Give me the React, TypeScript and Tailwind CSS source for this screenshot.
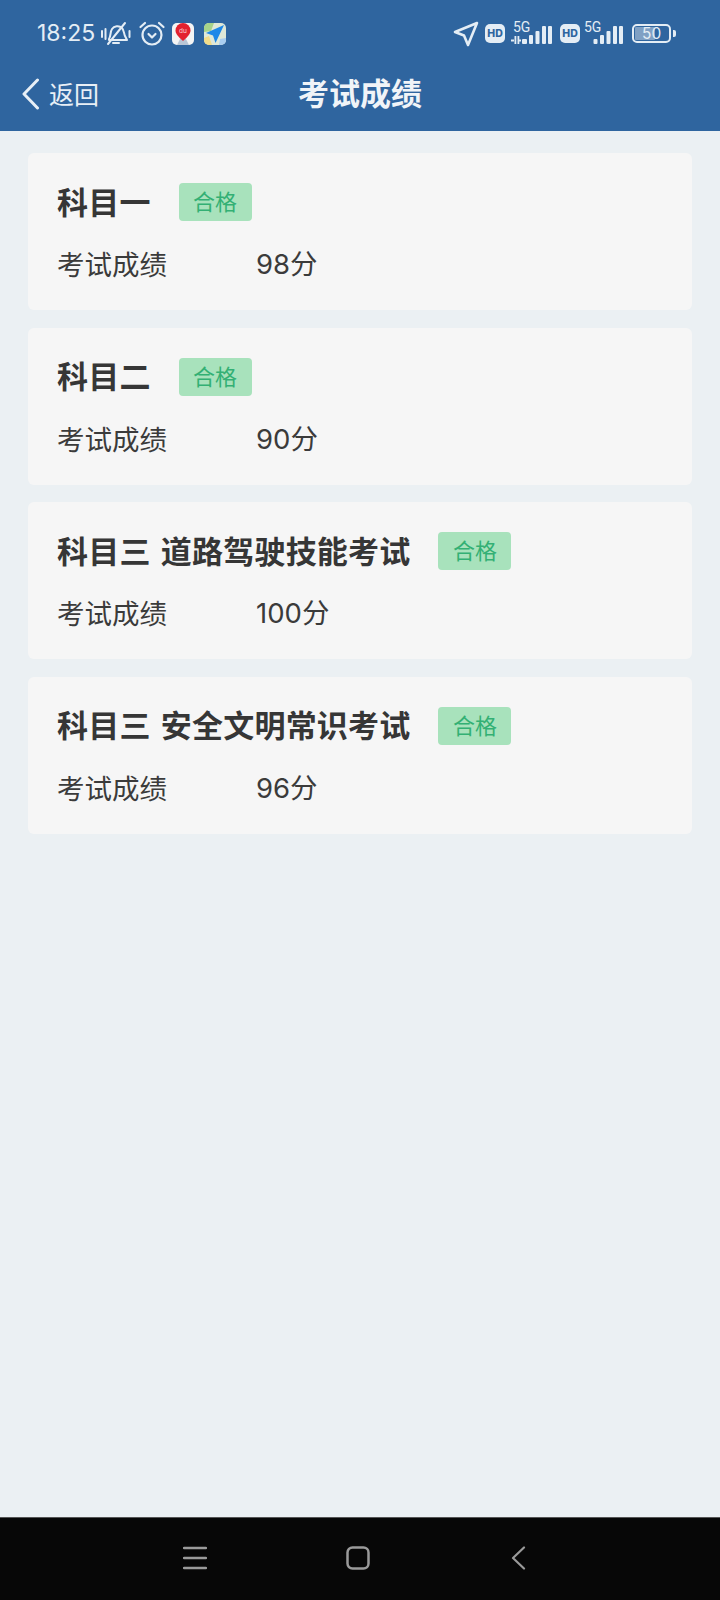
const font = { fontFamily: 'Inter, "Noto Sans CJK SC", "Noto Sans", sans-serif' };
const cjk = { fontFamily: '"Noto Sans CJK SC", "Noto Sans", sans-serif' };

const subjects = [
  { name: '科目一', score: '98分' },
  { name: '科目二', score: '90分' },
  { name: '科目三 道路驾驶技能考试', score: '100分' },
  { name: '科目三 安全文明常识考试', score: '96分' },
];

const Signal = ({ transfer }: { transfer?: boolean }) => (
  <div className={transfer ? 'relative w-[41px] h-[30px]' : 'relative w-[39px] h-[30px]'}>
    <span className={transfer ? "absolute left-[2px] top-[1px] text-[14px] leading-[14px] text-[#e4edf5] font-['Roboto']" : "absolute left-[0px] top-[1px] text-[14px] leading-[14px] text-[#e4edf5] font-['Roboto']"}>
      5G
    </span>
    {transfer ? (
      <svg width="41" height="30" viewBox="0 0 41 30" fill="#e4edf5">
        <rect x="0" y="20.500" width="3" height="2" />
        <rect x="3.500" y="17" width="1.800" height="8" />
        <rect x="6.500" y="17" width="1.800" height="8" />
        <rect x="8" y="20.500" width="2" height="2" />
        <rect x="11" y="20" width="5" height="5" rx="1" />
        <rect x="18" y="16" width="4" height="9" rx="1" />
        <rect x="24.500" y="12" width="4" height="13" rx="1" />
        <rect x="31" y="7" width="4" height="18" rx="1" />
        <rect x="37" y="7" width="4" height="18" rx="1" />
      </svg>
    ) : (
      <svg width="39" height="30" viewBox="0 0 39 30" fill="#e4edf5">
        <rect x="9.500" y="20" width="4" height="5" rx="1" />
        <rect x="16" y="16" width="4" height="9" rx="1" />
        <rect x="22.500" y="12" width="4" height="13" rx="1" />
        <rect x="29" y="7" width="4" height="18" rx="1" />
        <rect x="35" y="7" width="4" height="18" rx="1" />
      </svg>
    )}
  </div>
);

const Hd = () => (
  <div className="w-[20px] h-[19px] rounded-[5px] bg-[#e4edf5] text-[#2f659f] text-[10.500px] leading-[19px] font-extrabold text-center font-['Inter']">
    HD
  </div>
);

const StatusBar = () => (
  <div className="h-[66px] flex items-center pl-[37px] pr-[44px] pt-[1px]">
    <span className="text-[23px] text-[#e4edf5] font-['Inter'] w-[65px] whitespace-nowrap">18:25</span>
    <svg className="ml-[-1px]" width="30" height="28" viewBox="0 0 30 28" fill="none" stroke="#e4edf5" strokeWidth="2" strokeLinecap="round" strokeLinejoin="round">
      <path d="M8 19c2-3 1-7 3-10 2-3 7-4 10-1 2 2 2 6 3 8l2 4H8z" />
      <path d="M12 23h6" />
      <path d="M7 24 24 3" />
      <path d="M1 11v6M4.500 9v10M28.500 11v6" />
    </svg>
    <svg className="ml-[7px]" width="28" height="28" viewBox="0 0 28 28" fill="none" stroke="#e4edf5" strokeWidth="2.200" strokeLinecap="round" strokeLinejoin="round">
      <circle cx="14" cy="15" r="9.500" />
      <path d="M10.500 14l3.500 3.500 3.500-3.500" />
      <path d="M2.500 7 7 3M25.500 7 21 3" />
    </svg>
    <svg className="ml-[6px]" width="22" height="22" viewBox="0 0 22 22">
      <rect width="22" height="22" rx="5" fill="#f4f4f4" />
      <path d="M5 22 8 16h6l3 6z" fill="#b9c6d6" />
      <path d="M11 18C6.500 14 3.500 11 3.500 7.500a7.500 7.500 0 0 1 15 0C18.500 11 15.500 14 11 18z" fill="#e3212f" />
      <text x="11" y="10" textAnchor="middle" fontSize="7" fontFamily="Roboto" fill="#f9c6ca">du</text>
    </svg>
    <svg className="ml-[10px]" width="22" height="22" viewBox="0 0 22 22">
      <rect width="22" height="22" rx="5" fill="#dfe8d8" />
      <path d="M0 5a5 5 0 0 1 5-5h5L7 8 0 9z" fill="#a7d38a" />
      <path d="M0 15l5-2 3 9H5a5 5 0 0 1-5-5z" fill="#f2dc8a" />
      <path d="M15 22l1-6 6-1v2a5 5 0 0 1-5 5z" fill="#a9cdf0" />
      <path d="M20 2 2 10l7 2.500 2.500 7.500z" fill="#1e88e8" />
    </svg>
    <div className="flex-1" />
    <svg width="26" height="26" viewBox="0 0 26 26" fill="none" stroke="#e4edf5" strokeWidth="2.600" strokeLinejoin="round">
      <path d="M24 2 2 11l9 3.500L15 24z" />
    </svg>
    <div className="ml-[6px]"><Hd /></div>
    <div className="ml-[6px]"><Signal transfer /></div>
    <div className="ml-[8px]"><Hd /></div>
    <div className="ml-[4px]"><Signal /></div>
    <div className="ml-[9px] w-[39px] h-[19px] rounded-[5px] border-2 border-[#e4edf5] p-[1px]">
      <div className="relative w-[20px] h-full bg-[#7fa0c4] rounded-[1px]">
        <span className="absolute left-[7px] top-[-3px] text-[15.500px] leading-[19px] text-[#e4edf5] font-['Inter']">50</span>
      </div>
    </div>
    <div className="ml-[2px] w-[3px] h-[7px] rounded-r-[2px] bg-[#e4edf5]" />
  </div>
);

const Header = () => (
  <div className="bg-[#2f659f] h-[131px] flex flex-col shrink-0">
    <StatusBar />
    <div className="relative flex-1 flex items-center justify-center pb-[15px]" style={cjk}>
      <span className="text-[31px] font-bold text-[#f0f4f8] leading-none">考试成绩</span>
      <div className="absolute left-[22px] top-[10px] flex items-center">
        <svg className="mt-[2px]" width="18" height="32" viewBox="0 0 18 32" fill="none" stroke="#e8eff6" strokeWidth="3" strokeLinecap="round" strokeLinejoin="round">
          <path d="M15.500 2 2 16l13.500 14" />
        </svg>
        <span className="ml-[9px] text-[25px] text-[#e8eff6] leading-none">返回</span>
      </div>
    </div>
  </div>
);

const ScoreCard = ({ name, score }: { name: string; score: string }) => (
  <div className="h-[157px] rounded-[6px] bg-[#f6f6f6] pl-[29px] pt-[30px]" style={font}>
    <div className="flex items-center h-[38px]">
      <span className="text-[31px] font-bold text-[#363636] leading-none whitespace-pre tracking-[0.2px] [word-spacing:3px] mt-[-4px]" style={cjk}>{name}</span>
      <span className="ml-[28px] w-[73px] h-[38px] rounded-[4px] bg-[#a8e2bc] text-[#33b074] text-[22px] leading-[35px] text-center" style={cjk}>合格</span>
    </div>
    <div className="flex items-center mt-[25px] text-[27.500px] text-[#3b3b3b] leading-[36px]">
      <span className="w-[199px] mt-[-2px]" style={cjk}>考试成绩</span>
      <span>{score}</span>
    </div>
  </div>
);

const NavBar = () => (
  <div className="h-[83px] bg-[#070707] border-t border-[#555555] shrink-0 flex items-center justify-center pb-[3px] pr-[10px]">
    <svg width="24" height="24" viewBox="0 0 24 24" stroke="#9a9a9a" strokeWidth="2.500" strokeLinecap="round">
      <path d="M1 2h22M1 12h22M1 22h22" />
    </svg>
    <svg className="ml-[139px]" width="24" height="24" viewBox="0 0 24 24" fill="none" stroke="#9a9a9a" strokeWidth="2.500">
      <rect x="1.500" y="1.500" width="21" height="21" rx="5" />
    </svg>
    <svg className="ml-[141px]" width="16" height="24" viewBox="0 0 16 24" fill="none" stroke="#9a9a9a" strokeWidth="2.200" strokeLinecap="round" strokeLinejoin="round">
      <path d="M13 1.500 2 12l11 10.500" />
    </svg>
  </div>
);

export default function App() {
  return (
    <div className="w-[720px] h-[1600px] flex flex-col bg-[#ebf0f3] overflow-hidden">
      <Header />
      <div className="flex-1 px-[28px] pt-[22px] flex flex-col gap-[17.500px]">
        {subjects.map((subject) => (
          <ScoreCard key={subject.name} name={subject.name} score={subject.score} />
        ))}
      </div>
      <NavBar />
    </div>
  );
}
